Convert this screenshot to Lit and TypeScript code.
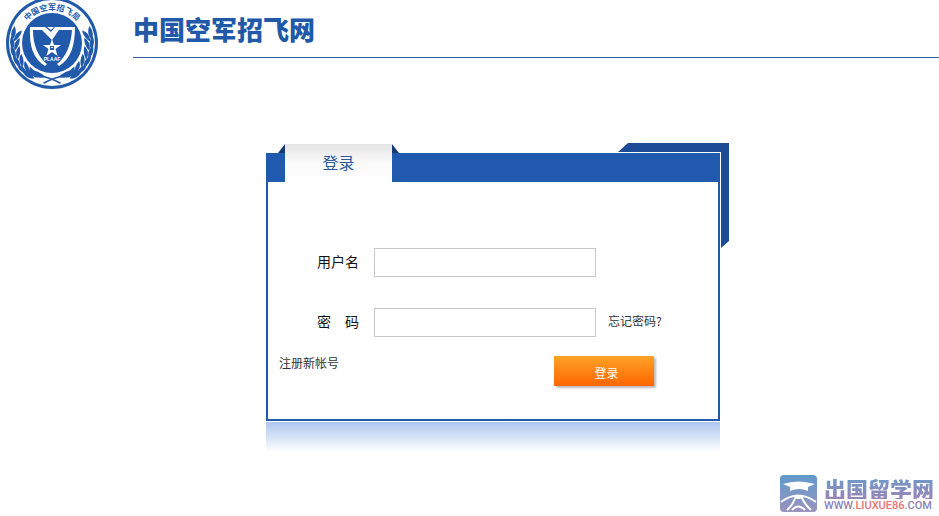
import { LitElement, html, css, svg } from "lit";
import { customElement } from "lit/decorators.js";

const leafAngles = [-12, 2, 16, 30, 44, 57];

@customElement("air-emblem")
class AirEmblem extends LitElement {
  static styles = css`
    :host { display: block; }
    svg { display: block; width: 92px; height: 92px; }
    .blue { fill: #2159ab; }
    .white { fill: #fff; }
    .leaf { fill: #2159ab; }
    .stem { fill: none; stroke: #2159ab; stroke-width: 1.5; stroke-linecap: round; }
    .arc { fill: none; }
    .name { font: 700 8px "Noto Sans CJK SC", sans-serif; fill: #2159ab; text-anchor: middle; }
    .code { font: bold 5px "Liberation Sans", sans-serif; fill: #fff; text-anchor: middle; }
  `;

  private branch() {
    return svg`
      ${leafAngles.map((a) => svg`
        <g transform=${`rotate(${-a} 46 46)`}>
          <path class="leaf" d="M6 50 C3 45 4 41 6 37 C9 42 9 46 7 50Z" />
          <path class="leaf" d="M8 51 C8 45 10 42 14 40 C14 45 12 49 9 52Z" />
        </g>`)}
      <path class="stem" d="M33 79 Q43 80 54 86" />
      <path class="leaf" d="M19 74 C26 71 34 75 40 80 C31 82 24 79 19 74Z" />`;
  }

  render() {
    return html`
      <svg viewBox="0 0 92 92" role="img" aria-label="中国空军招飞局">
        <circle class="blue" cx="46" cy="46" r="46" />
        <circle class="white" cx="46" cy="46" r="43" />
        <circle class="blue" cx="46" cy="46" r="30" />
        ${this.branch()}
        <g transform="translate(92 0) scale(-1 1)">${this.branch()}</g>
        <path id="arc" class="arc" d="M13 46 A33 33 0 0 1 79 46" />
        <text class="name"><textPath href="#arc" startOffset="50%">中国空军招飞局</textPath></text>
        <path class="white" d="M24 30 H39 L45 35 L49 30 H69 C69 48 65 62 53 69 L51 67 C60 60 65 48 66 33 H53 L46 43 L36 33 H27 C27 48 32 60 41 67 L39 69 C27 62 23 48 24 30Z" />
        <path class="white" d="M41 30 H48 L45 33Z" />
        <path class="white" d="M46 42 L48 48 H55 L49.500 52 L51.600 59 L46 55 L40.400 59 L42.500 52 L37 48 H44Z" />
        <path class="blue" d="M44 49 H48 V53 H44Z" />
        <path class="white" d="M45 50 H47 V51 H45Z" />
        <text class="code" x="46" y="64">PLAAF</text>
      </svg>`;
  }
}

@customElement("site-mark")
class SiteMark extends LitElement {
  static styles = css`
    :host { display: flex; gap: 7px; align-items: flex-start; }
    svg { display: block; width: 37px; height: 37px; }
    .words { display: flex; flex-direction: column; width: 112px; padding-top: 2px; }
    .name {
      font: 900 22px/22px "Noto Sans CJK SC", sans-serif;
      color: transparent;
      background: linear-gradient(#6c9ac9, #9886b6);
      background-clip: text;
      -webkit-background-clip: text;
    }
    .url { font: 500 11px/13px Roboto, sans-serif; color: #8d83b3; white-space: nowrap; }
    .accent { color: #ed7272; }
    .white { fill: #fff; }
    .line { fill: none; stroke: #fff; stroke-width: 2; }
  `;

  render() {
    return html`
      <svg viewBox="0 0 37 37" aria-hidden="true">
        <defs>
          <linearGradient id="g" x1="0" y1="0" x2="0" y2="1">
            <stop offset="0" stop-color="#609acb" />
            <stop offset="1" stop-color="#9a93bd" />
          </linearGradient>
        </defs>
        <rect width="37" height="37" rx="4" fill="url(#g)" />
        <path class="white" d="M3 9 Q18 4 35 9 L28 12 V16 Q19 12 10 16 V12Z" />
        <path class="line" d="M1 27 Q18 14 36 27" />
        <path class="line" d="M7 35 Q13 30 16 21 M31 35 Q25 30 21 21 M12 35 Q18 28 25 35" />
        <path class="white" d="M13 21 Q18 19 24 21 L20 24 H17Z" />
      </svg>
      <div class="words">
        <span class="name">出国留学网</span>
        <span class="url">WWW.<span class="accent">LIUXUE86</span>.COM</span>
      </div>`;
  }
}

@customElement("login-panel")
class LoginPanel extends LitElement {
  static styles = css`
    :host {
      display: block;
      position: relative;
      isolation: isolate;
      width: 454px;
      font: 14px/20px "Noto Sans CJK SC", sans-serif;
      color: #111;
    }
    .ribbon {
      position: absolute;
      z-index: -1;
      top: -10px;
      right: -9px;
      width: 111px;
      height: 105px;
      background: #1d4b95;
      clip-path: polygon(0 9px, 10px 0, 100% 0, 100% 98px, 103px 100%, 90px 100%, 90px 20px, 0 20px);
    }
    .card { background: #fff; border: 2px solid #2159ab; box-shadow: 0 0 0 1px #fff; }
    .bar { display: flex; align-items: flex-end; height: 27px; padding-left: 17px; background: #2159ae; }
    .tab {
      position: relative;
      width: 107px;
      height: 38px;
      margin: 0;
      background: linear-gradient(#e4e4e4, #fafafa 50%, #fff);
      color: #2b5997;
      font-size: 16px;
      font-weight: 400;
      line-height: 36px;
      text-align: center;
    }
    .tab::before, .tab::after { content: ""; position: absolute; top: 0; width: 7px; height: 9px; background: #163b72; }
    .tab::before { right: 100%; clip-path: polygon(100% 0, 100% 100%, 0 100%); }
    .tab::after { left: 100%; clip-path: polygon(0 0, 100% 100%, 0 100%); }
    form { margin: 0; padding: 66px 0 33px; }
    .fields {
      display: grid;
      grid-template-columns: 45px 222px 1fr;
      column-gap: 12px;
      row-gap: 31px;
      align-items: center;
      padding-left: 49px;
    }
    .fields label { grid-column: 1; white-space: nowrap; }
    .fields label, .fields a { padding-bottom: 3px; }
    input {
      grid-column: 2;
      box-sizing: border-box;
      width: 100%;
      height: 29px;
      padding: 0 6px;
      border: 1px solid #c8c8c8;
      border-radius: 0;
      background: #fff;
      font: inherit;
      outline: none;
    }
    input:focus-visible { border-color: #2159ab; }
    a { color: #333; font-size: 12px; line-height: 14px; text-decoration: none; }
    .actions { display: flex; justify-content: space-between; align-items: flex-start; padding: 19px 64px 0 11px; }
    button {
      width: 100px;
      height: 30px;
      padding: 4px 0 0 5px;
      border: 0;
      background: linear-gradient(#ffa326, #ff6500);
      box-shadow: 2px 2px 2px #bbb;
      color: #fff;
      font: 12px/14px "Noto Sans CJK SC", sans-serif;
      cursor: pointer;
    }
    .glow { height: 30px; margin-top: 1px; background: linear-gradient(#adc6f0, #fff); }
  `;

  render() {
    return html`
      <div class="ribbon"></div>
      <div class="card">
        <div class="bar"><h2 class="tab">登录</h2></div>
        <form @submit=${(e: Event) => e.preventDefault()}>
          <div class="fields">
            <label for="user">用户名</label>
            <input id="user" type="text" autocomplete="username" />
            <label for="pass">密　码</label>
            <input id="pass" type="password" autocomplete="current-password" />
            <a href="#forgot">忘记密码?</a>
          </div>
          <div class="actions">
            <a href="#register">注册新帐号</a>
            <button type="submit">登录</button>
          </div>
        </form>
      </div>
      <div class="glow"></div>`;
  }
}

@customElement("app-root")
class AppRoot extends LitElement {
  static styles = css`
    :host { display: flex; flex-direction: column; min-height: 100vh; background: #fff; overflow: hidden; }
    header { display: flex; align-items: flex-start; gap: 35px; padding-left: 6px; }
    air-emblem { margin-top: -3px; }
    .brand { flex: 1; border-bottom: 1px solid #34609c; padding: 11px 0 10px; }
    h1 { margin: 0; font: 900 26px/36px "Noto Sans CJK SC", sans-serif; color: #2159a8; }
    main { display: flex; justify-content: center; padding: 64px 0 20px 47px; }
    footer { display: flex; justify-content: flex-end; margin-top: auto; padding: 0 3px 4px 0; }
  `;

  render() {
    return html`
      <header>
        <air-emblem></air-emblem>
        <div class="brand"><h1>中国空军招飞网</h1></div>
      </header>
      <main><login-panel></login-panel></main>
      <footer><site-mark></site-mark></footer>`;
  }
}
